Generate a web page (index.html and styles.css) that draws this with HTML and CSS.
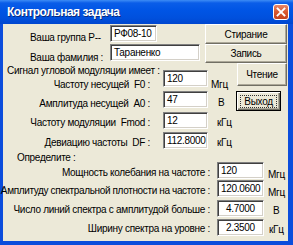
FILE: index.html
```html
<!DOCTYPE html>
<html lang="ru">
<head>
  <meta charset="UTF-8">
  <title>Контрольная задача</title>
  <link rel="stylesheet" href="styles.css">
</head>
<body>
  <div class="window">
    <div class="titlebar">
      <span class="title">Контрольная задача</span>
      <span class="close">
        <svg width="16" height="16" viewBox="0 0 16 16">
          <defs>
            <linearGradient id="cg" x1="0" y1="0" x2="0" y2="1">
              <stop offset="0" stop-color="#e98a6c"/>
              <stop offset="0.5" stop-color="#d8582f"/>
              <stop offset="1" stop-color="#c2401c"/>
            </linearGradient>
          </defs>
          <rect x="0.5" y="0.5" width="15" height="15" rx="2.5" fill="url(#cg)" stroke="#fff"/>
          <path d="M4.5 4.5 L11.5 11.5 M11.5 4.5 L4.5 11.5" stroke="#fff" stroke-width="1.8" stroke-linecap="square"/>
        </svg>
      </span>
    </div>

    <div class="client">
      <div class="line line-group">
        <span class="lbl lbl-top">Ваша группа Р--</span>
        <div class="edit edit-group">РФ08-10</div>
        <button class="btn btn-wide">Стирание</button>
      </div>

      <div class="line line-name">
        <span class="lbl lbl-top">Ваша фамилия :</span>
        <div class="edit edit-name">Тараненко</div>
        <button class="btn btn-wide btn-short">Запись</button>
      </div>

      <div class="line line-f0">
        <div class="lbl-col">
          <div class="caption">Сигнал угловой модуляции имеет :</div>
          <div class="lbl-param">Частоту несущей&nbsp; F0 :</div>
        </div>
        <div class="edit edit-param">120</div>
        <span class="unit unit-f0">Мгц</span>
        <button class="btn btn-read">Чтение</button>
      </div>

      <div class="line line-a0">
        <span class="lbl lbl-a0">Амплитуда несущей&nbsp; A0 :</span>
        <div class="edit edit-param">47</div>
        <span class="unit unit-a0">В</span>
        <button class="btn btn-exit"><span class="focus">Выход</span></button>
      </div>

      <div class="line line-fmod">
        <span class="lbl lbl-fmod">Частоту модуляции&nbsp; Fmod :</span>
        <div class="edit edit-param">12</div>
        <span class="unit unit-khz">кГц</span>
      </div>

      <div class="line line-df">
        <span class="lbl lbl-df">Девиацию частоты&nbsp; DF :</span>
        <div class="edit edit-param">112.8000</div>
        <span class="unit unit-khz">кГц</span>
      </div>

      <div class="line line-def">
        <span class="caption caption-def">Определите :</span>
      </div>

      <div class="line line-res">
        <div class="lbl-res"><span>Мощность колебания на частоте :</span></div>
        <div class="edit edit-res">120</div>
        <span class="unit unit-res">Мгц</span>
      </div>

      <div class="line line-res line-res2">
        <div class="lbl-res lbl-long"><span>Амплитуду спектральной плотности на частоте :</span></div>
        <div class="edit edit-res">120.0600</div>
        <span class="unit unit-res">Мгц</span>
      </div>

      <div class="line line-res line-res3">
        <div class="lbl-res"><span>Число линий спектра с амплитудой больше :</span></div>
        <div class="edit edit-res edit-center">4.7000</div>
        <span class="unit unit-res unit-v">В</span>
      </div>

      <div class="line line-res line-res3">
        <div class="lbl-res"><span>Ширину спектра на уровне :</span></div>
        <div class="edit edit-res edit-center">2.3500</div>
        <span class="unit unit-res unit-khz2">кГц</span>
      </div>
    </div>
  </div>
</body>
</html>
```

FILE: styles.css
```css
html, body { margin: 0; padding: 0; background: #fff; }

.window {
  width: 293px; height: 245px;
  display: flex; flex-direction: column;
  background: #0b4ddc;
  font-family: "Liberation Sans", Arial, sans-serif;
  font-size: 10px;
  letter-spacing: -0.3px;
  color: #000;
}

/* заголовок окна */
.titlebar {
  height: 24px; flex: none;
  display: flex; align-items: center;
  background: linear-gradient(#3d8cf5 0, #0a5de8 3px, #0055e5 10px, #0050dd 18px, #0046cf 24px);
}
.title {
  margin-left: 7px;
  color: #fff;
  font-weight: bold;
  font-size: 12px;
  letter-spacing: -0.5px;
  text-shadow: 1px 1px #0a2a7a;
}
.close { margin-left: auto; margin-right: 4px; height: 16px; }
.close svg { display: block; }

.client {
  flex: 1;
  margin: 0 5px 4px 3px;
  background: #ece9d8;
  display: flex; flex-direction: column;
}

.line { display: flex; align-items: flex-start; flex: none; }
.lbl, .caption, .unit, .lbl-param, .lbl-res { line-height: 14px; white-space: nowrap; }

/* поля ввода */
.edit {
  box-sizing: border-box;
  height: 17px;
  background: #fff;
  border: 1px solid; border-color: #808080 #fff #fff #808080;
  box-shadow: inset 1px 1px #404040, inset -1px -1px #d4d0c8;
  padding: 1px 0 0 3px;
  line-height: 13px;
  white-space: nowrap; overflow: hidden;
}
.edit-center { text-align: center; padding-left: 0; }

/* кнопки */
.btn {
  box-sizing: border-box;
  margin: 0 1px 0 auto;
  padding: 0;
  font: inherit; letter-spacing: inherit;
  background: #ece9d8;
  border: 1px solid; border-color: #fff #716f64 #716f64 #fff;
  box-shadow: inset -1px -1px #aca899;
  color: #000;
}

/* строки группы и фамилии */
.line-group { height: 20px; }
.line-name { height: 19px; }
.lbl-top { margin-left: 27px; width: 80px; padding-top: 7px; }
.edit-group { width: 47px; margin-top: 1px; }
.edit-name { width: 90px; }
.btn-wide { width: 82px; height: 20px; }
.btn-short { height: 19px; }

/* параметры сигнала */
.line-f0 { height: 24px; }
.lbl-col { width: 147px; flex: none; }
.caption { padding-left: 4px; margin-top: 1px; }
.lbl-param { text-align: right; }
.edit-param { width: 45px; margin-left: 13px; }
.line-f0 .edit-param { margin-top: 7px; }
.unit-f0 { margin-left: 3px; padding-top: 15px; }
.btn-read { width: 50px; height: 23px; }

.line-a0 { height: 24px; }
.lbl-a0, .lbl-fmod, .lbl-df { width: 147px; text-align: right; flex: none; }
.lbl-a0 { padding-top: 10px; }
.line-a0 .edit-param { margin-top: 4px; }
.unit-a0 { margin-left: 10px; padding-top: 9px; }
.btn-exit {
  width: 45px; height: 20px; margin: 4px 7px 0 auto;
  border: 1px solid #000;
  box-shadow: inset 1px 1px #fff, inset -1px -1px #716f64, inset -2px -2px #aca899;
  display: flex; align-items: center; justify-content: center;
}
.focus { border: 1px dotted #333; padding: 0 3px; line-height: 11px; }

.line-fmod { height: 19px; }
.lbl-fmod { padding-top: 5px; }
.line-fmod .edit-param { margin-top: 1px; }
.unit-khz { margin-left: 9px; padding-top: 5px; }

.line-df { height: 20px; }
.lbl-df { padding-top: 6px; }
.line-df .edit-param { margin-top: 2px; }
.line-df .unit-khz { padding-top: 6px; }

.line-def { height: 12px; }
.caption-def { padding-left: 14px; margin-top: 1px; }

/* результаты */
.line-res { height: 18px; }
.line-res2, .line-res3 { height: 19px; }
.lbl-res {
  width: 207px; flex: none;
  display: flex; justify-content: flex-end;
  padding-top: 4px;
}
.lbl-long { letter-spacing: -0.36px; }
.edit-res { width: 47px; margin-left: 7px; }
.line-res3 .edit-res { margin-top: 1px; }
.unit-res { margin-left: 4px; padding-top: 6px; }
.line-res3 .unit-res { padding-top: 5px; }
.unit-v { margin-left: 9px; }
.unit-khz2 { margin-left: 5px; }
```
